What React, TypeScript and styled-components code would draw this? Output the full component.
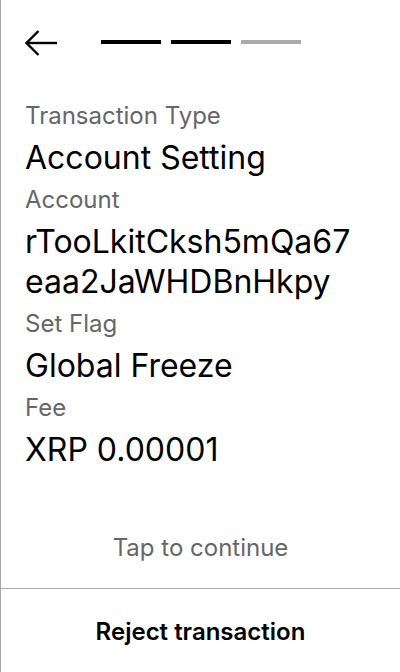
import React from "react";
import styled, { createGlobalStyle } from "styled-components";

const GlobalStyle = createGlobalStyle`
  html, body {
    margin: 0;
    padding: 0;
    background: #ffffff;
  }
  * { box-sizing: border-box; }
  body {
    font-family: Inter, "Noto Sans", sans-serif;
  }
`;

const Screen = styled.div`
  width: 400px;
  height: 672px;
  display: flex;
  flex-direction: column;
  border-left: 1px solid #a9a9a9;
  background: #ffffff;
  color: #000;
`;

const Header = styled.div`
  height: 86px;
  display: flex;
  align-items: center;
  padding-left: 24px;
  gap: 44px;
`;

const BackButton = styled.button`
  width: 32px;
  height: 26px;
  padding: 0;
  border: none;
  background: none;
  display: flex;
  align-items: center;
  cursor: pointer;
`;

const Steps = styled.div`
  display: flex;
  gap: 10px;
  margin-top: -2px;
`;

const Step = styled.div<{ $active: boolean }>`
  width: 60px;
  height: 4px;
  background: ${(p) => (p.$active ? "#000000" : "#aaaaaa")};
`;

const Content = styled.div`
  flex: 1;
  display: flex;
  flex-direction: column;
  gap: 8px;
  padding: 16px 38px 0 24px;
`;

const Label = styled.div`
  font-size: 24px;
  line-height: 28px;
  color: #666666;
`;

const Value = styled.div`
  font-size: 32px;
  line-height: 40px;
  color: #000000;
  word-break: break-all;
`;

const Hint = styled.div`
  text-align: center;
  font-size: 24px;
  line-height: 28px;
  color: #666666;
  padding-bottom: 26px;
`;

const Footer = styled.button`
  height: 84px;
  border: none;
  border-top: 1px solid #a9a9a9;
  background: #ffffff;
  font-family: Inter, "Noto Sans", sans-serif;
  font-size: 24px;
  font-weight: 600;
  color: #000000;
  display: flex;
  align-items: center;
  justify-content: center;
  padding: 2px 0 0;
  cursor: pointer;
`;

const ArrowIcon = () => (
  <svg width="32" height="26" viewBox="0 0 32 26" fill="none">
    <path d="M32 13H1.5" stroke="#000" strokeWidth="2.4" />
    <path d="M13.5 1L1.5 13L13.5 25" stroke="#000" strokeWidth="2.4" />
  </svg>
);

const fields: { label: string; value: string }[] = [
  { label: "Transaction Type", value: "Account Setting" },
  { label: "Account", value: "rTooLkitCksh5mQa67eaa2JaWHDBnHkpy" },
  { label: "Set Flag", value: "Global Freeze" },
  { label: "Fee", value: "XRP 0.00001" },
];

export default function App() {
  return (
    <>
      <GlobalStyle />
      <Screen>
        <Header>
          <BackButton aria-label="Back">
            <ArrowIcon />
          </BackButton>
          <Steps>
            <Step $active={true} />
            <Step $active={true} />
            <Step $active={false} />
          </Steps>
        </Header>
        <Content>
          {fields.map((f) => (
            <React.Fragment key={f.label}>
              <Label>{f.label}</Label>
              <Value>{f.value}</Value>
            </React.Fragment>
          ))}
        </Content>
        <Hint>Tap to continue</Hint>
        <Footer>Reject transaction</Footer>
      </Screen>
    </>
  );
}
